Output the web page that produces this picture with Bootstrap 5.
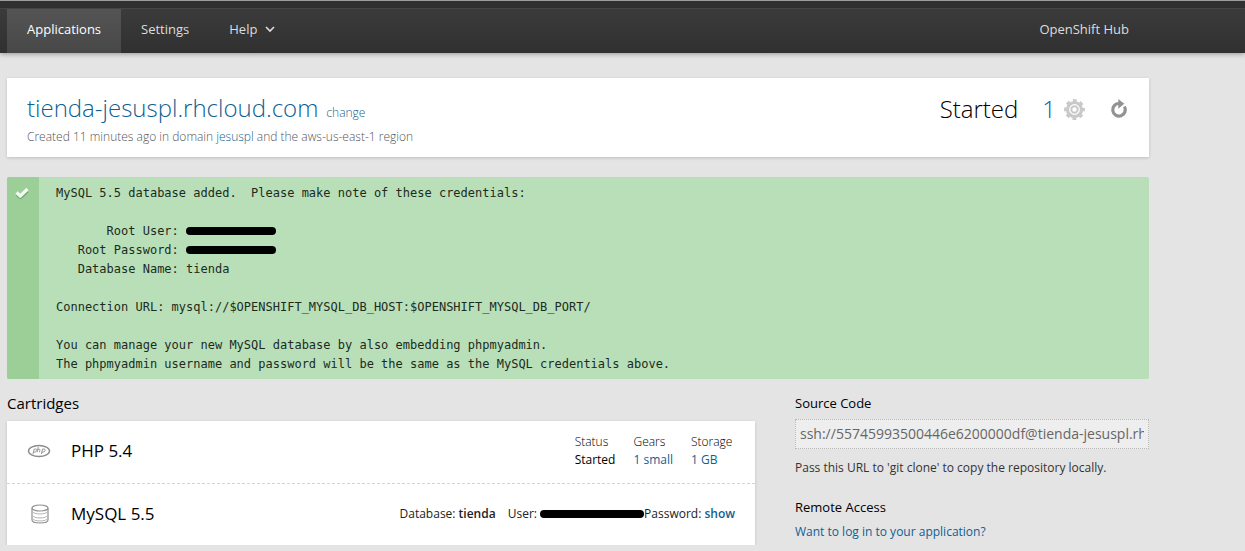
<!DOCTYPE html>
<html lang="en">
<head>
<meta charset="utf-8">
<meta name="viewport" content="width=device-width, initial-scale=1">
<title>tienda-jesuspl.rhcloud.com</title>
<link href="https://cdn.jsdelivr.net/npm/bootstrap@5.3.0/dist/css/bootstrap.min.css" rel="stylesheet">
<style>
  body { background: #e4e4e4; color: #000; font-family: "Open Sans", sans-serif; font-size: 13px; line-height: 18px; }
  a { color: #0f5f93; text-decoration: none; }
  .page-wrap { max-width: 1149px; padding-left: 7px; }
  .topbar { border-top: 1px solid #9b9e9e; background: #303030; padding-top: 7px; box-shadow: 0 1px 5px rgba(0,0,0,.35); }
  .topbar-main { border-top: 1px solid #454545; background: linear-gradient(#3b3b3b, #303030); }
  .topbar .nav-link { color: #ddd; font-size: 13px; line-height: 20px; padding: 10px 20px 14px; }
  .topbar .nav-link.active { background: linear-gradient(#545454, #484848); color: #fff; }
  .panel { background: #fff; box-shadow: 0 1px 3px rgba(0,0,0,.16); }
  .app-head { margin-top: 25px; padding: 16px 20px 11px; }
  .app-title, .app-state { font-size: 24px; line-height: 28px; font-weight: 300; }
  .app-state { padding-top: 1px; }
  .app-meta { font-weight: 300; color: #555; font-size: 12px; line-height: 18px; margin-top: 6px; }
  .change-link { font-size: 12px; font-weight: 300; }
  .notice { margin-top: 20px; background: #b9dfb9; border-radius: 2px; overflow: hidden; }
  .notice-mark { width: 32px; background: #9bcf97; padding: 5px 0 0 8px; }
  .notice pre { font: 12px/19px "DejaVu Sans Mono", monospace; color: #1c2b1c; padding: 7px 17px 5px; }
  .redacted { display: inline-block; background: #000; border-radius: 4px; width: 90px; height: 8px; }
  .redacted-wide { width: 104px; }
  .main-cols { display: grid; grid-template-columns: minmax(0, 748fr) minmax(0, 354fr); column-gap: 40px; margin-top: 14px; }
  .section-title { font-size: 15px; line-height: 20px; font-weight: 400; margin-bottom: 8px; }
  .cartridge { height: 62px; padding: 0 20px 2px; }
  .cartridge + .cartridge { border-top: 1px dashed #d4d4d4; }
  .cartridge-icon { width: 44px; }
  .cartridge-name { font-size: 17px; line-height: 24px; font-weight: 400; }
  .usage th, .usage td { padding: 0 0 0 18px; line-height: 18px; font-size: 12px; }
  .usage th:last-child { width: 62px; }
  .usage th { font-weight: 300; }
  .creds { font-size: 12px; color: #222; }
  .creds b { font-weight: 600; }
  .side-title { font-size: 13px; line-height: 20px; font-weight: 400; margin-bottom: 6px; }
  .clone-url { height: 30px; background: #eee; border: 1px dotted #b8b8b8; color: #666; font-size: 14px; padding: 0 4px 2px; }
  .side-text { font-size: 12px; line-height: 18px; color: #333; margin: 10px 0 20px; }
</style>
</head>
<body>
<header class="topbar">
  <div class="topbar-main">
    <nav class="page-wrap d-flex" aria-label="Main">
      <a class="nav-link active" href="#" aria-current="page">Applications</a>
      <a class="nav-link" href="#">Settings</a>
      <a class="nav-link d-flex align-items-center gap-2" href="#">Help
        <svg width="10" height="8" viewBox="0 0 10 8" fill="none" stroke="#ddd" stroke-width="1.6" aria-hidden="true"><path d="M1 2l4 4 4-4"/></svg>
      </a>
      <a class="nav-link ms-auto" href="#">OpenShift Hub</a>
    </nav>
  </div>
</header>

<main class="page-wrap">
  <section class="panel app-head d-flex justify-content-between">
    <div>
      <div class="d-flex align-items-baseline">
        <h1 class="app-title m-0 me-2"><a href="#">tienda-jesuspl.rhcloud.com</a></h1>
        <a class="change-link" href="#">change</a>
      </div>
      <p class="app-meta mb-0">Created 11 minutes ago in domain <a href="#">jesuspl</a> and the aws-us-east-1 region</p>
    </div>
    <div class="app-state d-flex align-items-center align-self-start">
      <span>Started</span>
      <a class="d-flex align-items-center ms-4" href="#" aria-label="1 gear">
        <span class="me-2">1</span>
        <svg width="21" height="21" viewBox="0 0 21 21" fill="none" stroke="#c9c9c9" aria-hidden="true">
          <circle cx="10.500" cy="10.500" r="7" stroke-width="3.200"/>
          <circle cx="10.500" cy="10.500" r="8.900" stroke-width="3" stroke-dasharray="3.700 3.290" stroke-dashoffset="1.850"/>
          <circle cx="10.500" cy="10.500" r="3.200" stroke-width="2"/>
        </svg>
      </a>
      <button class="btn p-0 border-0 ms-4 d-flex" type="button" aria-label="Restart">
        <svg width="20" height="20" viewBox="0 0 20 20" aria-hidden="true"><path d="M10.500 4.500A6.300 6.300 0 1 0 15.400 7.500" fill="none" stroke="#929292" stroke-width="3.200"/><path d="M9.300 0L15.300 4.800l-6 5z" fill="#929292"/></svg>
      </button>
    </div>
  </section>

  <section class="notice d-flex" role="status">
    <div class="notice-mark flex-shrink-0">
      <svg width="14" height="12" viewBox="0 0 14 12" aria-hidden="true"><path d="M2 6.500l3.500 3L12.500 3" transform="translate(0 1)" fill="none" stroke="#76a874" stroke-width="3.400"/><path d="M1.500 5.500l3.800 3.500L12.500 2" fill="none" stroke="#f3faf2" stroke-width="3.200"/></svg>
    </div>
    <pre class="m-0 flex-grow-1">MySQL 5.5 database added.  Please make note of these credentials:

       Root User: <span class="redacted"></span>
   Root Password: <span class="redacted"></span>
   Database Name: tienda

Connection URL: mysql://$OPENSHIFT_MYSQL_DB_HOST:$OPENSHIFT_MYSQL_DB_PORT/

You can manage your new MySQL database by also embedding phpmyadmin.
The phpmyadmin username and password will be the same as the MySQL credentials above.</pre>
  </section>

  <div class="main-cols">
    <section>
      <h2 class="section-title">Cartridges</h2>
      <div class="panel">
        <div class="cartridge d-flex align-items-center">
          <div class="cartridge-icon flex-shrink-0 d-flex">
            <svg width="24" height="14" viewBox="0 0 24 14" fill="none" stroke="#8b8b8b" aria-hidden="true"><ellipse cx="12" cy="7" rx="10.500" ry="5.500" stroke-width="1.400"/><path d="M6 10l1.200-5h1.300q1.500 0 1.200 1.500T7.800 8.100H6.500M11.300 3l-1.200 5.200M10.900 5.200h1.200q1 0 .8 1l-.5 2M14.400 10l1.200-5h1.300q1.500 0 1.200 1.500t-1.900 1.600h-1.300" stroke-width=".9"/></svg>
          </div>
          <h3 class="cartridge-name m-0"><a class="text-black" href="#">PHP 5.4</a></h3>
          <table class="usage ms-auto">
            <thead><tr><th scope="col">Status</th><th scope="col">Gears</th><th scope="col">Storage</th></tr></thead>
            <tbody><tr><td>Started</td><td><a href="#">1 small</a></td><td><a href="#">1 GB</a></td></tr></tbody>
          </table>
        </div>
        <div class="cartridge d-flex align-items-center">
          <div class="cartridge-icon flex-shrink-0 d-flex">
            <svg class="ms-1" width="18" height="20" viewBox="0 0 18 20" fill="none" stroke="#929292" aria-hidden="true"><ellipse cx="9" cy="4" rx="8" ry="3" stroke-width="1.100"/><path d="M1 4v12c0 4 16 4 16 0V4" stroke-width="1.200"/><path d="M1.500 7.500c1 3.300 14 3.300 15 0M1.500 11.500c1 3.300 14 3.300 15 0M1.500 14.500c1 3.300 14 3.300 15 0" stroke="#aaa" stroke-width=".9"/></svg>
          </div>
          <h3 class="cartridge-name m-0"><a class="text-black" href="#">MySQL 5.5</a></h3>
          <div class="creds ms-auto d-flex">
            <span class="me-2 pe-1">Database: <b>tienda</b></span>
            <span>User: <span class="redacted redacted-wide"></span></span>
            <span>Password: <a href="#"><b>show</b></a></span>
          </div>
        </div>
      </div>
    </section>
    <aside>
      <h2 class="side-title"><label for="clone-url">Source Code</label></h2>
      <input class="clone-url w-100 d-block" id="clone-url" type="text" readonly value="ssh://55745993500446e6200000df@tienda-jesuspl.rhcloud.com/~/git/tienda.git/">
      <p class="side-text">Pass this URL to 'git clone' to copy the repository locally.</p>
      <h2 class="side-title">Remote Access</h2>
      <p class="side-text mt-0 mb-0"><a href="#">Want to log in to your application?</a></p>
    </aside>
  </div>
</main>
<script src="https://cdn.jsdelivr.net/npm/bootstrap@5.3.0/dist/js/bootstrap.bundle.min.js"></script>
</body>
</html>
